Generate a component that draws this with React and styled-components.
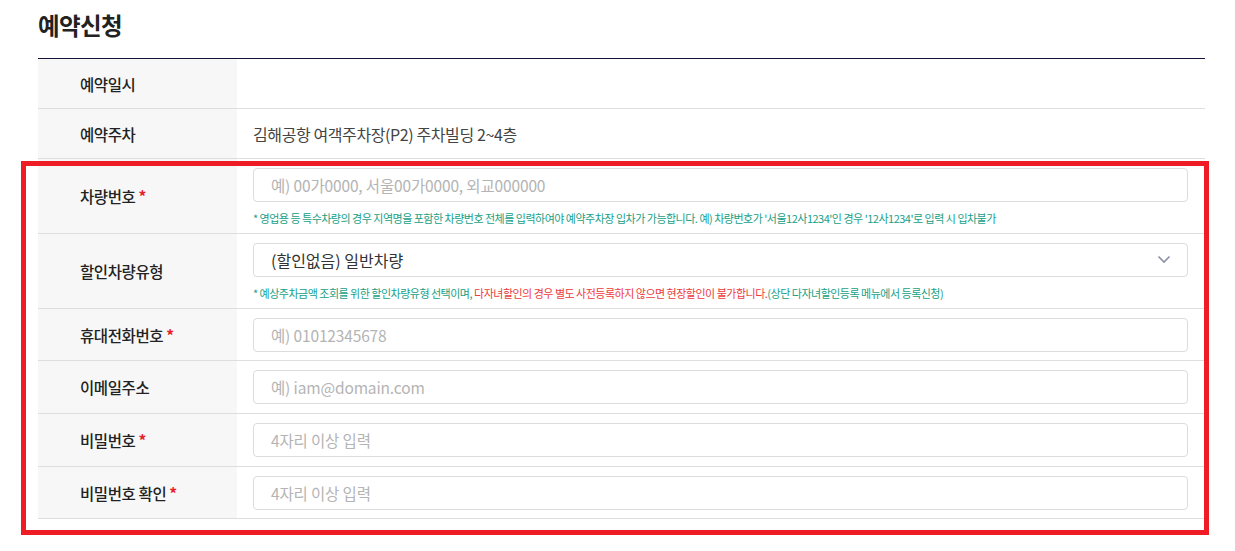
import React from "react";
import styled, { createGlobalStyle } from "styled-components";

const GlobalStyle = createGlobalStyle`
  html, body {
    margin: 0;
    padding: 0;
    background: #fff;
    font-family: "Noto Sans CJK KR", "Noto Sans", sans-serif;
    color: #222;
  }
  * { box-sizing: border-box; }
`;

const Page = styled.div`
  padding: 6px 30px 24px 38px;
  width: 1235px;
`;

const Title = styled.h2`
  margin: 0;
  height: 52px;
  font-size: 23.5px;
  font-weight: 700;
  letter-spacing: -0.6px;
  line-height: 38px;
  color: #222;
`;

const Table = styled.div`
  border-top: 1px solid #14143a;
  width: 1167px;
`;

// red annotation frame drawn over the editable rows
const Highlight = styled.div`
  position: relative;
  &::after {
    content: "";
    position: absolute;
    left: -17px;
    right: -4px;
    top: 2px;
    bottom: -16px;
    border: 5px solid #ee1c25;
    pointer-events: none;
  }
`;

const Row = styled.div`
  display: grid;
  grid-template-columns: 199px 1fr;
  border-bottom: 1px solid #dedede;
  min-height: ${({ $h }) => $h || 51}px;
`;

const Label = styled.div`
  background: #f7f7f7;
  display: flex;
  align-items: center;
  padding-left: 42px;
  font-size: 15.5px;
  font-weight: 500;
  letter-spacing: -0.4px;
  color: #222;
`;

const Star = styled.span`
  color: #e8202a;
  margin-left: 3px;
  font-weight: 700;
`;

const Cell = styled.div`
  padding: 8px 17px 8px 16px;
  display: flex;
  flex-direction: column;
  justify-content: center;
`;

const Value = styled.div`
  font-size: 16px;
  color: #444;
  letter-spacing: -0.4px;
`;

const Input = styled.input`
  width: 100%;
  height: 34px;
  border: 1px solid #dcdcdc;
  border-radius: 4px;
  padding: 0 17px;
  font-family: inherit;
  font-size: 15.5px;
  letter-spacing: -0.15px;
  color: #333;
  outline: none;
  &::placeholder { color: #b4b4b4; }
`;

const SelectBox = styled.div`
  height: 34px;
  border: 1px solid #dcdcdc;
  border-radius: 4px;
  padding: 0 16px 0 17px;
  display: flex;
  align-items: center;
  justify-content: space-between;
  font-size: 16px;
  color: #333;
`;

const Help = styled.p`
  margin: 9px 0 0;
  font-size: 11px;
  line-height: 14px;
  letter-spacing: -0.5px;
  color: #17a086;
`;

const Warn = styled.span`
  color: #ec3b3b;
`;

const Chevron = () => (
  <svg width="14" height="9" viewBox="0 0 14 9" fill="none">
    <path d="M1.5 1.5 L7 7 L12.5 1.5" stroke="#8b90a6" strokeWidth="1.6" />
  </svg>
);

function Field({ label, required, children, h }) {
  return (
    <Row $h={h}>
      <Label>
        {label}
        {required && <Star>*</Star>}
      </Label>
      <Cell>{children}</Cell>
    </Row>
  );
}

export default function App() {
  return (
    <>
      <GlobalStyle />
      <Page>
        <Title>예약신청</Title>
        <Table>
          <Field label="예약일시" h={50} />
          <Field label="예약주차" h={50}>
            <Value>김해공항 여객주차장(P2) 주차빌딩 2~4층</Value>
          </Field>
          <Highlight>
            <Field label="차량번호" required h={75}>
              <Input placeholder="예) 00가0000, 서울00가0000, 외교000000" />
              <Help>
                * 영업용 등 특수차량의 경우 지역명을 포함한 차량번호 전체를 입력하여야 예약주차장 입차가 가능합니다. 예) 차량번호가 '서울12사1234'인 경우 '12사1234'로 입력 시 입차불가
              </Help>
            </Field>
            <Field label="할인차량유형" h={75}>
              <SelectBox>
                (할인없음) 일반차량
                <Chevron />
              </SelectBox>
              <Help>
                * 예상주차금액 조회를 위한 할인차량유형 선택이며,{" "}
                <Warn>다자녀할인의 경우 별도 사전등록하지 않으면 현장할인이 불가합니다.</Warn>
                (상단 다자녀할인등록 메뉴에서 등록신청)
              </Help>
            </Field>
            <Field label="휴대전화번호" required h={52}>
              <Input placeholder="예) 01012345678" />
            </Field>
            <Field label="이메일주소" h={53}>
              <Input placeholder="예) iam@domain.com" />
            </Field>
            <Field label="비밀번호" required h={53}>
              <Input type="password" placeholder="4자리 이상 입력" />
            </Field>
            <Field label="비밀번호 확인" required h={52}>
              <Input type="password" placeholder="4자리 이상 입력" />
            </Field>
          </Highlight>
        </Table>
      </Page>
    </>
  );
}
